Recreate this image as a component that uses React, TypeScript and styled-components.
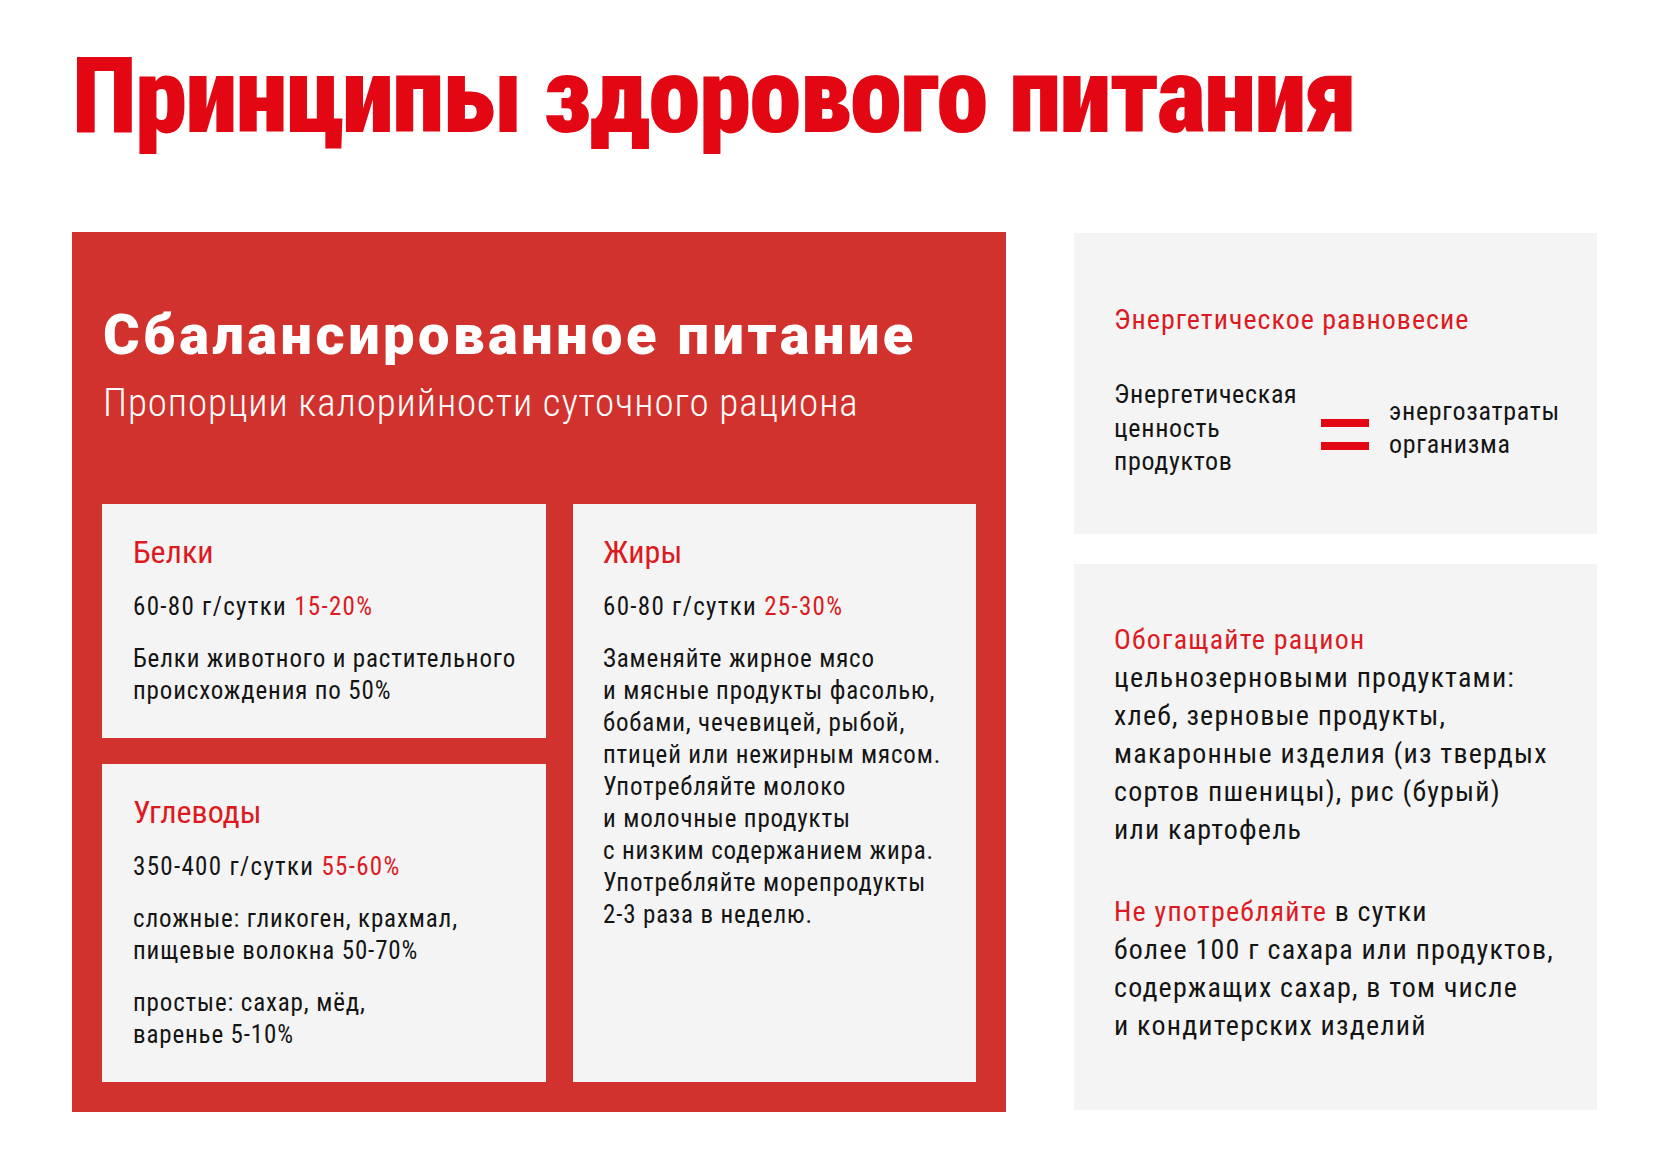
import React from "react";
import styled, { createGlobalStyle } from "styled-components";

const FONT = 'Roboto, "Liberation Sans", sans-serif';
const TITLE_RED = "#e30613";
const ACCENT = "#dc1a22";
const PANEL_RED = "#d2322d";
const LIGHT = "#f4f4f4";
const INK = "#141414";

const GlobalStyle = createGlobalStyle`
  body {
    margin: 0;
    background: #ffffff;
    font-family: ${FONT};
    color: ${INK};
  }
`;

const Page = styled.div`
  width: 1664px;
  min-height: 1172px;
  box-sizing: border-box;
  padding: 43px 0 0 72px;
`;

const Title = styled.h1`
  margin: 0;
  font-family: ${FONT};
  font-weight: 900;
  font-stretch: 75%;
  font-size: 106px;
  line-height: 106px;
  letter-spacing: -2px;
  color: ${TITLE_RED};
  white-space: nowrap;
`;

const Main = styled.div`
  display: grid;
  grid-template-columns: 934px 523px;
  column-gap: 68px;
  margin-top: 83px;
  align-items: start;
`;

const BalancePanel = styled.section`
  background: ${PANEL_RED};
  height: 880px;
  box-sizing: border-box;
  padding: 73px 30px 30px 30px;
  display: flex;
  flex-direction: column;
`;

const PanelHeading = styled.h2`
  margin: 0 0 0 1px;
  font-weight: 900;
  font-stretch: 100%;
  font-size: 56px;
  line-height: 60px;
  letter-spacing: 3.5px;
  color: #ffffff;
  white-space: nowrap;
`;

const PanelSubtitle = styled.p`
  margin: 15px 0 0 1px;
  font-weight: 300;
  font-stretch: 85%;
  font-size: 39px;
  line-height: 46px;
  letter-spacing: 0.9px;
  color: #ffffff;
  white-space: nowrap;
`;

const CardGrid = styled.div`
  margin-top: 78px;
  display: grid;
  grid-template-columns: 444px 403px;
  grid-template-rows: 234px 318px;
  column-gap: 27px;
  row-gap: 26px;
`;

const Card = styled.article<{ $tall?: boolean }>`
  background: ${LIGHT};
  box-sizing: border-box;
  padding: 29px 12px 0 ${({ $tall }) => ($tall ? 30 : 31)}px;
  grid-row: ${({ $tall }) => ($tall ? "1 / span 2" : "auto")};
  grid-column: ${({ $tall }) => ($tall ? 2 : 1)};
`;

const CardTitle = styled.h3`
  margin: 0;
  font-weight: 400;
  font-stretch: 78%;
  font-size: 32px;
  line-height: 38px;
  letter-spacing: 0;
  color: ${ACCENT};
`;

const CardText = styled.p<{ $amount?: boolean }>`
  margin: 20px 0 0;
  font-weight: 400;
  font-stretch: 84%;
  font-size: 25px;
  line-height: 32px;
  letter-spacing: ${({ $amount }) => ($amount ? 1.3 : 0.85)}px;
  color: ${INK};
  white-space: pre-line;
`;

const Accent = styled.span`
  color: ${ACCENT};
`;

const SideColumn = styled.div`
  display: flex;
  flex-direction: column;
  gap: 30px;
  margin-top: 1px;
`;

const SidePanel = styled.section<{ $h: number; $pt: number }>`
  background: ${LIGHT};
  height: ${({ $h }) => $h}px;
  box-sizing: border-box;
  padding: ${({ $pt }) => $pt}px 12px 0 40px;
`;

const SideHeading = styled.h3`
  margin: 0;
  font-weight: 400;
  font-stretch: 82%;
  font-size: 28px;
  line-height: 34px;
  letter-spacing: 1px;
  color: ${ACCENT};
`;

const Equation = styled.div`
  margin-top: 41px;
  display: flex;
  align-items: center;
`;

const EquationText = styled.p<{ $w?: number }>`
  margin: 0;
  width: ${({ $w }) => ($w ? `${$w}px` : "auto")};
  font-weight: 400;
  font-stretch: 82%;
  font-size: 26px;
  line-height: 33.5px;
  letter-spacing: 0.7px;
  white-space: pre-line;
`;

const EqualsSign = styled.div`
  display: flex;
  flex-direction: column;
  gap: 15px;
  margin: 12px 20px 0 22px;
`;

const EqualsBar = styled.span`
  display: block;
  width: 48px;
  height: 8px;
  background: ${TITLE_RED};
`;

const AdviceText = styled.p<{ $gap?: number }>`
  margin: ${({ $gap }) => $gap || 0}px 0 0;
  font-weight: 400;
  font-stretch: 84%;
  font-size: 28px;
  line-height: 38px;
  letter-spacing: 1.2px;
  white-space: pre-line;
`;

export default function App() {
  return (
    <>
      <GlobalStyle />
      <Page>
        <Title>Принципы здорового питания</Title>
        <Main>
          <BalancePanel>
            <PanelHeading>Сбалансированное питание</PanelHeading>
            <PanelSubtitle>Пропорции калорийности суточного рациона</PanelSubtitle>
            <CardGrid>
              <Card>
                <CardTitle>Белки</CardTitle>
                <CardText $amount>
                  60-80 г/сутки <Accent>15-20%</Accent>
                </CardText>
                <CardText>{"Белки животного и растительного\nпроисхождения по 50%"}</CardText>
              </Card>
              <Card $tall>
                <CardTitle>Жиры</CardTitle>
                <CardText $amount>
                  60-80 г/сутки <Accent>25-30%</Accent>
                </CardText>
                <CardText>
                  {
                    "Заменяйте жирное мясо\nи мясные продукты фасолью,\nбобами, чечевицей, рыбой,\nптицей или нежирным мясом.\nУпотребляйте молоко\nи молочные продукты\nс низким содержанием жира.\nУпотребляйте морепродукты\n2-3 раза в неделю."
                  }
                </CardText>
              </Card>
              <Card>
                <CardTitle>Углеводы</CardTitle>
                <CardText $amount>
                  350-400 г/сутки <Accent>55-60%</Accent>
                </CardText>
                <CardText>{"сложные: гликоген, крахмал,\nпищевые волокна 50-70%"}</CardText>
                <CardText>{"простые: сахар, мёд,\nваренье 5-10%"}</CardText>
              </Card>
            </CardGrid>
          </BalancePanel>

          <SideColumn>
            <SidePanel $h={301} $pt={70}>
              <SideHeading>Энергетическое равновесие</SideHeading>
              <Equation>
                <EquationText $w={185}>{"Энергетическая\nценность\nпродуктов"}</EquationText>
                <EqualsSign>
                  <EqualsBar />
                  <EqualsBar />
                </EqualsSign>
                <EquationText>{"энергозатраты\nорганизма"}</EquationText>
              </Equation>
            </SidePanel>

            <SidePanel $h={546} $pt={57}>
              <AdviceText>
                <Accent>Обогащайте рацион</Accent>
                <br />
                {"цельнозерновыми продуктами:\nхлеб, зерновые продукты,\nмакаронные изделия (из твердых\nсортов пшеницы), рис (бурый)\nили картофель"}
              </AdviceText>
              <AdviceText $gap={44}>
                <Accent>Не употребляйте</Accent>
                {" в сутки"}
                <br />
                {"более 100 г сахара или продуктов,\nсодержащих сахар, в том числе\nи кондитерских изделий"}
              </AdviceText>
            </SidePanel>
          </SideColumn>
        </Main>
      </Page>
    </>
  );
}
